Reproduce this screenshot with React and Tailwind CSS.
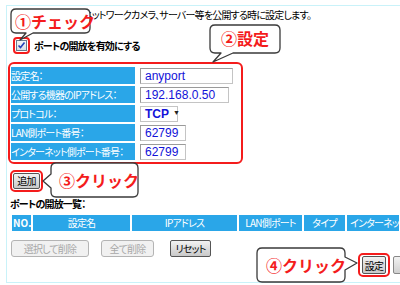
export default function App() {
  const rows = [
    { label: '設定名：', value: 'anyport', w: 'w-[93px]' },
    { label: '公開する機器のIPアドレス：', value: '192.168.0.50', w: 'w-[89px]' },
    { label: 'プロトコル：', value: 'TCP', select: true },
    { label: 'LAN側ポート番号：', value: '62799', w: 'w-[46px]' },
    { label: 'インターネット側ポート番号：', value: '62799', w: 'w-[46px]' },
  ];

  return (
    <div className="relative w-[400px] h-[285px] overflow-hidden bg-white text-[10px] tracking-[-0.8px] text-black font-['Noto_Sans_CJK_JP',sans-serif] [font-feature-settings:'palt']">
      <div className="ml-[6px] mt-[5px] w-[430px] h-[278px] border border-[#c9f2f9]">
        {/* intro */}
        <p className="ml-[76px] mt-[3px] leading-[11px] whitespace-nowrap">
          ネットワークカメラ、サーバー等を公開する時に設定します。
        </p>

        {/* enable checkbox */}
        <div className="flex items-center mt-[17px] ml-[6px]">
          <div className="w-[17px] h-[17px] border-2 border-[#f41c1c] rounded-[4px] flex items-center justify-center">
            <div className="w-[11px] h-[11px] border border-[#6b7b8c] bg-gradient-to-b from-[#f4f6f8] to-[#d9dee4] flex items-center justify-center">
              <svg width="9" height="9" viewBox="0 0 9 9">
                <path d="M1.5 4.5 L3.5 6.5 L7.5 1.5" fill="none" stroke="#2440b8" strokeWidth="1.6" />
              </svg>
            </div>
          </div>
          <span className="ml-[4px] font-bold leading-[11px]">ポートの開放を有効にする</span>
        </div>

        {/* settings form */}
        <div className="mt-[8px] ml-[1px] w-[235px] h-[102px] border-2 border-[#f41c1c] rounded-[6px] pt-[3px] pl-[1px] flex flex-col gap-[2px]">
          {rows.map((r) => (
            <div key={r.label} className="flex items-center h-[17px]">
              <div className="w-[124px] h-full bg-[#2aa6e8] text-white leading-[17px] whitespace-nowrap">{r.label}</div>
              {r.select ? (
                <div className="ml-[5px] w-[38px] h-[16px] border border-[#c4c4c4] bg-white flex items-center pl-[4px] tracking-normal text-[#1212d8] font-['Liberation_Sans',sans-serif] text-[12px] font-bold">
                  TCP
                  <span className="ml-[4px] text-[7px] text-[#222]">▼</span>
                </div>
              ) : (
                <div className={`ml-[5px] ${r.w} h-[16px] border border-[#c4c4c4] border-t-[#9a9a9a] border-l-[#9a9a9a] bg-white flex items-center pl-[4px] tracking-normal text-[#1212d8] font-['Liberation_Sans',sans-serif] text-[12px]`}>
                  {r.value}
                </div>
              )}
            </div>
          ))}
        </div>

        {/* add button */}
        <div className="mt-[6px] ml-[3px] w-[33px] h-[22px] border-2 border-[#f41c1c] rounded-[5px] flex items-center justify-center">
          <div className="w-[27px] h-[16px] border border-[#555] rounded-[2px] bg-gradient-to-b from-[#f2f2f2] to-[#c9c9c9] flex items-center justify-center leading-none">追加</div>
        </div>

        <p className="mt-[6px] ml-[3px] font-bold leading-[11px]">ポートの開放一覧：</p>

        {/* list header */}
        <div className="mt-[6px] ml-[5px] flex gap-[2px] h-[16px] text-white leading-[16px] text-center whitespace-nowrap">
          <div className="w-[19px] bg-[#2aa6e8] font-bold text-left pl-[1px] tracking-normal">NO.</div>
          <div className="w-[97px] bg-[#2aa6e8]">設定名</div>
          <div className="w-[105px] bg-[#2aa6e8]">IPアドレス</div>
          <div className="w-[63px] bg-[#2aa6e8]">LAN側ポート</div>
          <div className="w-[41px] bg-[#2aa6e8]">タイプ</div>
          <div className="w-[52px] bg-[#2aa6e8] text-left pl-[3px] overflow-hidden">インターネッ</div>
        </div>

        {/* action buttons */}
        <div className="mt-[9px] ml-[4px] flex items-start">
          <div className="w-[78px] h-[17px] border border-[#b4b4b4] rounded-[3px] bg-[#f1f1f1] text-[#a8a8a8] flex items-center justify-center">選択して削除</div>
          <div className="ml-[12px] w-[53px] h-[17px] border border-[#b4b4b4] rounded-[3px] bg-[#f1f1f1] text-[#a8a8a8] flex items-center justify-center">全て削除</div>
          <div className="ml-[16px] w-[41px] h-[17px] border border-[#555] rounded-[2px] bg-gradient-to-b from-[#f2f2f2] to-[#c9c9c9] flex items-center justify-center">リセット</div>
          <div className="ml-[147px] mt-[13px] w-[32px] h-[24px] border-2 border-[#f41c1c] rounded-[5px] flex items-center justify-center">
            <div className="w-[24px] h-[18px] border border-[#555] rounded-[2px] bg-gradient-to-b from-[#f2f2f2] to-[#c9c9c9] flex items-center justify-center">設定</div>
          </div>
          <div className="ml-[3px] mt-[16px] w-[30px] h-[18px] border border-[#888] rounded-[2px] bg-gradient-to-b from-[#f2f2f2] to-[#d0d0d0]" />
        </div>
      </div>

      {/* callout balloons */}
      <svg className="absolute left-0 top-0 pointer-events-none" width="400" height="285" viewBox="0 0 400 285">
        <g fill="#fff" stroke="#3a3a3a" strokeWidth="1.3" strokeLinejoin="round">
          <path d="M16,9 H85 Q90,9 90,14 V28 Q90,33 85,33 H33 L20,40 L26,33 H16 Q11,33 11,28 V14 Q11,9 16,9 Z" />
          <path d="M215,25 H275 Q280,25 280,30 V48 Q280,53 275,53 H233 L213,62 L221,53 H215 Q210,53 210,48 V30 Q210,25 215,25 Z" />
          <path d="M56,163 H133 Q138,163 138,168 V192 Q138,197 133,197 H56 Q51,197 51,192 V188 L43,181 L51,174 V168 Q51,163 56,163 Z" />
          <path d="M262,248 H340 Q345,248 345,253 V257 L357,263 L345,270 V277 Q345,282 340,282 H262 Q257,282 257,277 V253 Q257,248 262,248 Z" />
        </g>
      </svg>
      <span className="absolute left-[15px] top-[11px] leading-[20px] text-[16px] tracking-normal font-bold text-[#f41c1c] whitespace-nowrap [font-feature-settings:normal]">①チェック</span>
      <span className="absolute left-[221px] top-[28px] leading-[20px] text-[16px] tracking-normal font-bold text-[#f41c1c] whitespace-nowrap [font-feature-settings:normal]">②設定</span>
      <span className="absolute left-[59px] top-[170px] leading-[20px] text-[16px] tracking-normal font-bold text-[#f41c1c] whitespace-nowrap [font-feature-settings:normal]">③クリック</span>
      <span className="absolute left-[266px] top-[255px] leading-[20px] text-[16px] tracking-normal font-bold text-[#f41c1c] whitespace-nowrap [font-feature-settings:normal]">④クリック</span>
    </div>
  );
}
